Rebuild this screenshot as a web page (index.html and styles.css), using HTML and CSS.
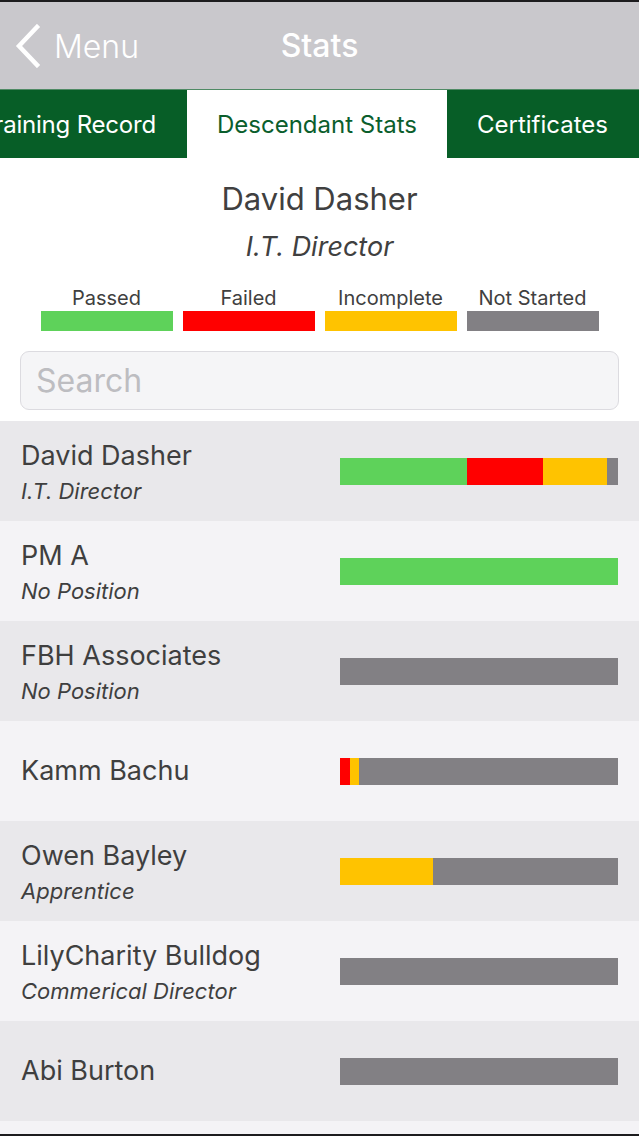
FILE: index.html
```html
<!DOCTYPE html>
<html>
<head>
<meta charset="utf-8">
<link rel="stylesheet" href="styles.css">
</head>
<body>
<div class="screen">
  <header class="navbar">
    <div class="back">
      <svg class="chev" width="30" height="44" viewBox="0 0 30 44"><path d="M23 3 L5 22 L23 41" fill="none" stroke="#fff" stroke-width="4.5" stroke-linecap="square"/></svg>
      <span>Menu</span>
    </div>
    <div class="title">Stats</div>
  </header>
  <nav class="tabs">
    <div class="tab first">Training Record</div>
    <div class="tab active">Descendant Stats</div>
    <div class="tab">Certificates</div>
  </nav>
  <section class="head">
    <div class="hname">David Dasher</div>
    <div class="hrole">I.T. Director</div>
    <div class="legend">
      <div class="lg"><span>Passed</span><i class="sw passed"></i></div>
      <div class="lg"><span>Failed</span><i class="sw failed"></i></div>
      <div class="lg"><span>Incomplete</span><i class="sw incomplete"></i></div>
      <div class="lg"><span>Not Started</span><i class="sw notstarted"></i></div>
    </div>
    <div class="search">Search</div>
  </section>
  <ul class="list">
    <li class="row dark">
      <div class="who"><div class="name">David Dasher</div><div class="role">I.T. Director</div></div>
      <div class="bar"><i class="passed" style="width:127px"></i><i class="failed" style="width:76px"></i><i class="incomplete" style="width:64px"></i><i class="notstarted" style="flex:1"></i></div>
    </li>
    <li class="row light">
      <div class="who"><div class="name">PM A</div><div class="role">No Position</div></div>
      <div class="bar"><i class="passed" style="flex:1"></i></div>
    </li>
    <li class="row dark">
      <div class="who"><div class="name">FBH Associates</div><div class="role">No Position</div></div>
      <div class="bar"><i class="notstarted" style="flex:1"></i></div>
    </li>
    <li class="row light">
      <div class="who"><div class="name">Kamm Bachu</div></div>
      <div class="bar"><i class="failed" style="width:10px"></i><i class="incomplete" style="width:9px"></i><i class="notstarted" style="flex:1"></i></div>
    </li>
    <li class="row dark">
      <div class="who"><div class="name">Owen Bayley</div><div class="role">Apprentice</div></div>
      <div class="bar"><i class="incomplete" style="width:93px"></i><i class="notstarted" style="flex:1"></i></div>
    </li>
    <li class="row light">
      <div class="who"><div class="name">LilyCharity Bulldog</div><div class="role">Commerical Director</div></div>
      <div class="bar"><i class="notstarted" style="flex:1"></i></div>
    </li>
    <li class="row dark">
      <div class="who"><div class="name">Abi Burton</div></div>
      <div class="bar"><i class="notstarted" style="flex:1"></i></div>
    </li>
    <li class="row light"></li>
  </ul>
</div>
</body>
</html>
```
FILE: styles.css
```css
* { box-sizing: border-box; }
html, body { margin: 0; padding: 0; }
body { font-family: Inter, Roboto, "Liberation Sans", sans-serif; background: #fff; }
.screen {
  width: 639px; height: 1136px; overflow: hidden;
  border-top: 2px solid #1c1c1e; border-bottom: 2px solid #1c1c1e;
  display: flex; flex-direction: column;
}
.navbar {
  height: 87px; background: #c9c8cc; position: relative;
  display: flex; align-items: center; justify-content: center;
  flex-shrink: 0;
}
.back {
  position: absolute; left: 14px; top: 22px;
  display: flex; align-items: center; color: #fff;
  font-size: 32px; font-weight: 300;
}
.back span { margin-left: 10px; }
.title { color: #fff; font-size: 32px; font-weight: 500; }
.tabs {
  height: 69px; background: #075e27; display: flex; flex-shrink: 0;
  border-top: 1px solid #4f8a64;
}
.tab {
  padding: 0 30px; display: flex; align-items: center; white-space: nowrap;
  color: #fff; font-size: 24px;
}
.tab.first { width: 187px; padding: 0 31px 0 0; justify-content: flex-end; overflow: hidden; letter-spacing: -0.2px; }
.tab.active { background: #fff; color: #0b5e2c; }
.head { padding-top: 17px; display: flex; flex-direction: column; align-items: center; flex-shrink: 0; }
.hname { font-size: 31px; line-height: 48px; color: #404040; }
.hrole { font-size: 27px; line-height: 48px; color: #404040; font-style: italic; }
.legend { display: flex; gap: 10px; margin-top: 16px; }
.lg { width: 132px; display: flex; flex-direction: column; align-items: center; }
.lg span { font-size: 20px; line-height: 22px; color: #404040; }
.sw { display: block; width: 132px; height: 20px; margin-top: 2px; }
.passed { background: #5ed25a; }
.failed { background: #ff0000; }
.incomplete { background: #ffc300; }
.notstarted { background: #828084; }
.search {
  margin: 20px 0 11px; width: 599px; height: 59px;
  border: 1px solid #dcdbe0; border-radius: 9px; background: #f5f5f7;
  font-size: 32px; color: #bdbdc1; padding-left: 15px;
  display: flex; align-items: center;
}
.list { list-style: none; margin: 0; padding: 0; }
.row {
  height: 100px; display: flex; align-items: center; justify-content: space-between;
  padding: 0 21px 0 21px;
}
.row.dark { background: #e9e8eb; }
.row.light { background: #f4f3f6; }
.name { font-size: 27px; line-height: 36px; color: #3f3f3f; }
.role { font-size: 22px; line-height: 35px; color: #3f3f3f; font-style: italic; margin-bottom: -5px; }
.bar { width: 278px; height: 27px; display: flex; }
.bar i { display: block; height: 100%; }
```
